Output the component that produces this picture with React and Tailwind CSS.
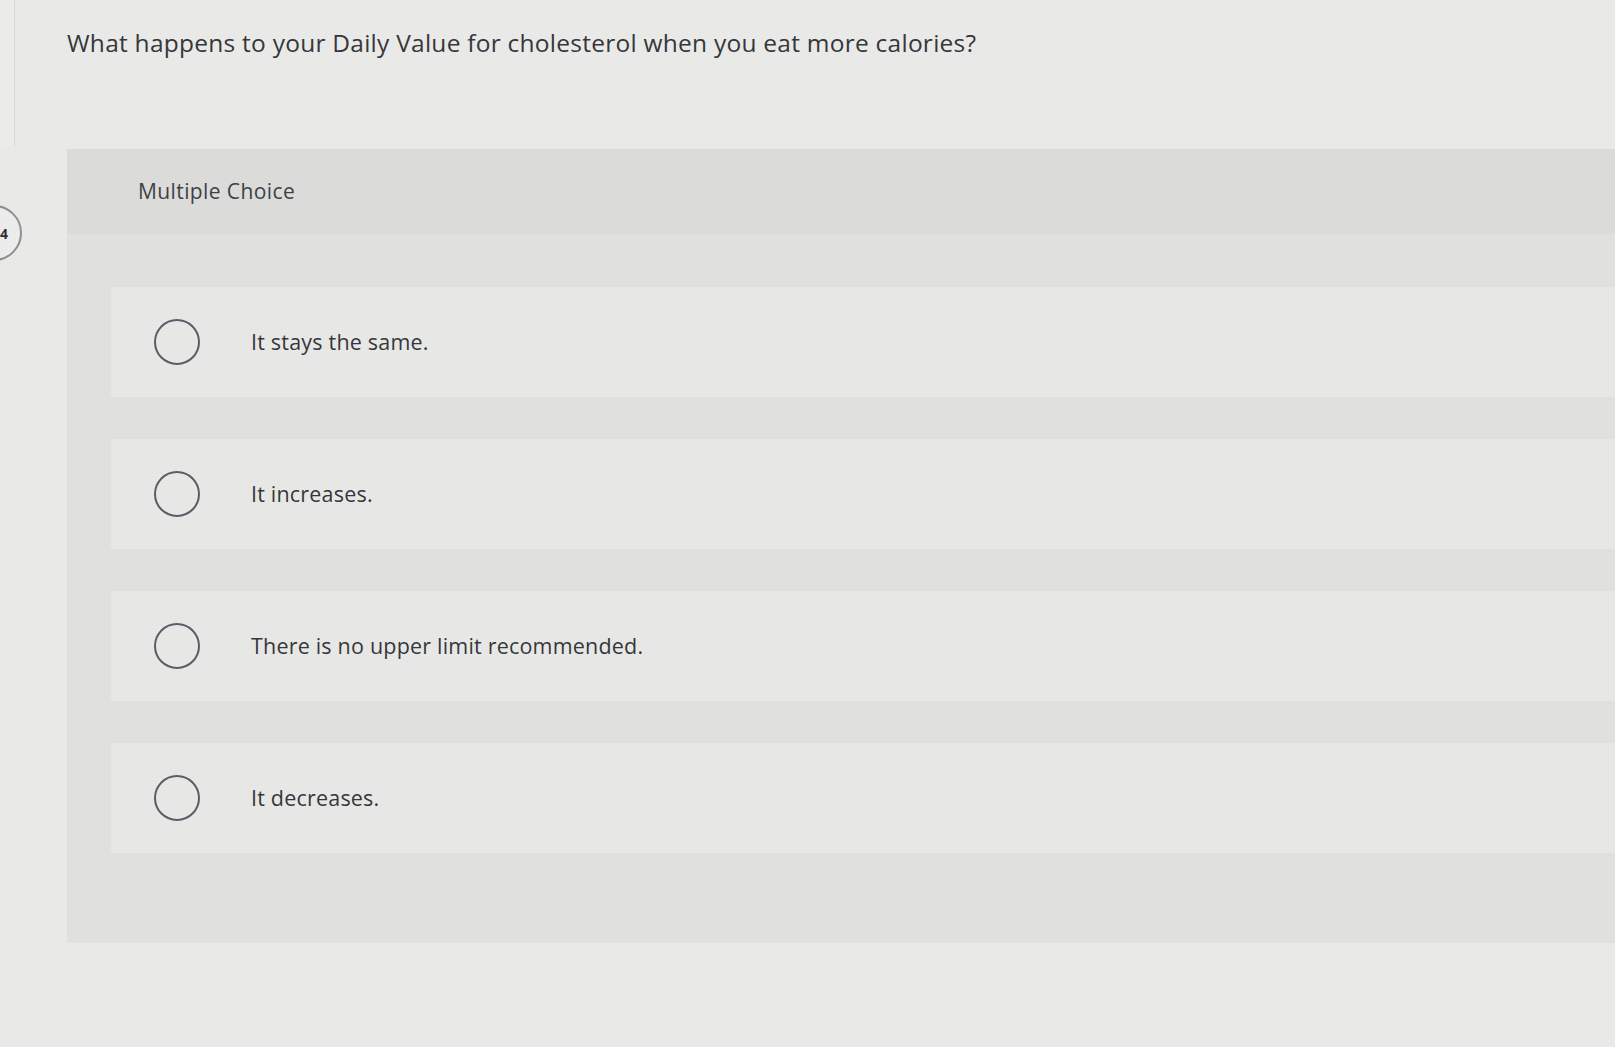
import React from 'react';

const choices = [
  'It stays the same.',
  'It increases.',
  'There is no upper limit recommended.',
  'It decreases.',
];

const Radio = () => (
  <span className="block w-[46px] h-[46px] shrink-0 rounded-full border-2 border-[#5b5d66] bg-transparent" />
);

const App = () => {
  return (
    <div
      className="flex min-h-screen h-[1047px] overflow-hidden bg-[#e9eae7] text-[#3b3c40]"
      style={{ fontFamily: '"Open Sans", Lato, Arial, sans-serif' }}
    >
      {/* left rail with question number */}
      <aside className="w-[22px] shrink-0 overflow-hidden">
        <div className="w-[15px] h-[146px] border-r border-[#d6d7d4] bg-[#ebecea]" />
        <div className="mt-[59px] -ml-[34px] w-[56px] h-[56px] rounded-full border-2 border-[#8e8f92] bg-[#ecedeb] flex items-center justify-end pr-[12px]">
          <span className="text-[14px] font-bold text-[#2f3033]">4</span>
        </div>
      </aside>

      <main className="flex-1 pl-[45px] pt-[26px]">
        <h1 className="text-[24.5px] leading-[34px] tracking-[0.25px] text-[#36373b]">
          What happens to your Daily Value for cholesterol when you eat more calories?
        </h1>

        <section className="mt-[89px] bg-[#e0e1de] pb-[90px]">
          <div className="h-[85px] bg-[#dbdcda] flex items-center pl-[71px]">
            <span className="text-[21px] tracking-[0.4px] text-[#404146]">Multiple Choice</span>
          </div>

          <div className="pl-[44px] pt-[53px] flex flex-col gap-[42px]">
            {choices.map((text) => (
              <label
                key={text}
                className="h-[110px] bg-[#e7e8e6] flex items-center pl-[43px] cursor-pointer"
              >
                <Radio />
                <span className="ml-[51px] text-[21.5px] tracking-[0.2px] text-[#36373b]">{text}</span>
              </label>
            ))}
          </div>
        </section>
      </main>
    </div>
  );
};

export default App;
